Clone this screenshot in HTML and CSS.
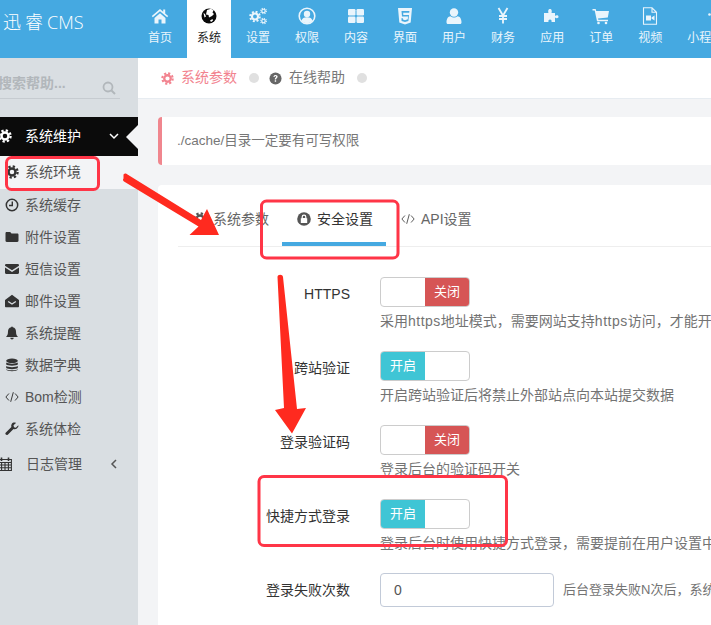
FILE: index.html
```html
<!doctype html>
<html lang="zh">
<head>
    <meta charset="utf-8">
    <title>迅睿 CMS</title>
    <link rel="stylesheet" href="styles.css">
</head>

<body>

<svg class="defs" width="0" height="0">
    <symbol id="i-gear" viewBox="0 0 16 16">
        <circle cx="8" cy="8" r="6.400" fill="none" stroke="currentColor" stroke-width="2.600" stroke-dasharray="2.600 2.430"/>
        <circle cx="8" cy="8" r="4" fill="none" stroke="currentColor" stroke-width="2.800"/>
    </symbol>
    <symbol id="i-code" viewBox="0 0 16 16">
        <path d="M4.500 4 1 8l3.500 4M11.500 4 15 8l-3.500 4M9.500 2.500l-3 11" fill="none" stroke="currentColor" stroke-width="1.100"/>
    </symbol>
</svg>

<header class="topbar">
    <div class="logo"><span class="logo-cn">迅睿</span><span>CMS</span></div>
    <nav class="nav">
        <a class="nav-item">
            <svg class="nav-icon" viewBox="0 0 18 18"><path fill="currentColor" d="M9 2 .8 9l1 1.200L9 4.200l7.200 6 1-1.200-3-2.600V2.500h-2v2.200zM3.500 11 9 6.300l5.500 4.700v5.500h-4v-4h-3v4h-4z"/></svg>
            <span>首页</span>
        </a>
        <a class="nav-item active">
            <svg class="nav-icon" viewBox="0 0 18 18"><circle cx="9" cy="9" r="7.500" fill="#0a0a0a"/><path fill="#fff" d="M7 3l4-1.200 2.500 1.500-1 2.200 1.500 1.500-2 2L9 10.500 8.500 8 6 7.500zM3.500 6l1.500 1 1 2.500-1.500 1zM10 13.500l2.500-1.500.5 1.500-2 1.500z"/></svg>
            <span>系统</span>
        </a>
        <a class="nav-item">
            <svg class="nav-icon" viewBox="0 0 18 18">
                <use href="#i-gear" x="0" y="3.500" width="12" height="12"/>
                <use href="#i-gear" x="11" y="0.500" width="7" height="7"/>
                <use href="#i-gear" x="11" y="10.500" width="7" height="7"/>
            </svg>
            <span>设置</span>
        </a>
        <a class="nav-item">
            <svg class="nav-icon" viewBox="0 0 18 18"><circle cx="9" cy="9" r="7.800" fill="none" stroke="currentColor" stroke-width="1.600"/><circle cx="9" cy="7" r="3.200" fill="currentColor"/><path fill="currentColor" d="M3.500 14c.5-2.800 2.500-3.800 5.500-3.800s5 1 5.500 3.800C13 15.500 11 16.200 9 16.200S5 15.500 3.500 14z"/></svg>
            <span>权限</span>
        </a>
        <a class="nav-item">
            <svg class="nav-icon" viewBox="0 0 18 18"><g fill="currentColor"><rect x="1" y="2" width="7.500" height="6.500" rx="1.200"/><rect x="9.500" y="2" width="7.500" height="6.500" rx="1.200"/><rect x="1" y="9.500" width="7.500" height="6.500" rx="1.200"/><rect x="9.500" y="9.500" width="7.500" height="6.500" rx="1.200"/></g></svg>
            <span>内容</span>
        </a>
        <a class="nav-item">
            <svg class="nav-icon" viewBox="0 0 18 18"><path fill="currentColor" fill-rule="evenodd" d="M2 1h14l-1.300 14.500L9 17.500l-5.700-2zm3.500 3 .5 5.500h6l-.2 2.800L9 13.200l-2-.7-.1-1.200H5.400l.2 2.700L9 15l3.400-1 .6-6H7.300l-.1-2.300h6l.2-1.700z"/></svg>
            <span>界面</span>
        </a>
        <a class="nav-item">
            <svg class="nav-icon" viewBox="0 0 18 18"><circle cx="9" cy="5.500" r="4.200" fill="currentColor"/><path fill="currentColor" d="M3 17c-1 0-1.500-.8-1.500-1.800C1.500 12 3 9.500 5.500 9.300 6.500 10.200 7.700 10.600 9 10.600s2.500-.4 3.500-1.300c2.500.2 4 2.700 4 5.900 0 1-.5 1.800-1.500 1.800z"/></svg>
            <span>用户</span>
        </a>
        <a class="nav-item">
            <svg class="nav-icon" viewBox="0 0 18 18"><path fill="none" stroke="currentColor" stroke-width="1.800" d="M4.500 1 9 8.500 13.500 1M9 8.500V16.500M5 9h8M5 12h8"/></svg>
            <span>财务</span>
        </a>
        <a class="nav-item">
            <svg class="nav-icon" viewBox="0 0 18 18"><path fill="currentColor" d="M1 6h4.500C5 4.500 5 2 7 2s2 2.500 1.500 4H12v3c1-1 3.500-1 3.500.8S13 11.500 12 10.500V15H8.500c.5-1.300-.3-2.500-1.500-2.500S5 13.700 5.500 15H1z"/></svg>
            <span>应用</span>
        </a>
        <a class="nav-item">
            <svg class="nav-icon" viewBox="0 0 18 18"><path fill="currentColor" d="M.5 2h3.200l.5 2H17l-1.200 6.500-9.800 1 .3 1.300h9.700v1.400H5L2.700 3.400H.5z"/><circle cx="6.500" cy="16" r="1.300" fill="currentColor"/><circle cx="14" cy="16" r="1.300" fill="currentColor"/></svg>
            <span>订单</span>
        </a>
        <a class="nav-item">
            <svg class="nav-icon" viewBox="0 0 18 18"><path fill="none" stroke="currentColor" stroke-width="1.100" d="M2.500 .8h8.500l4.500 4.500v12h-13zM11 .8v4.500h4.500"/><path fill="currentColor" d="M5 8.500h5v5H5zM10.500 10.500l3-2v5l-3-2z"/></svg>
            <span>视频</span>
        </a>
        <a class="nav-item">
            <svg class="nav-icon" viewBox="0 0 18 18"><circle cx="13.500" cy="7.500" r="1.300" fill="currentColor"/></svg>
            <span>小程序</span>
        </a>
    </nav>
</header>

<div class="layout">
    <aside class="sidebar">
        <div class="search">
            <span class="search-text">搜索帮助...</span>
            <svg class="search-icon" viewBox="0 0 14 14"><circle cx="6" cy="6" r="4.500" fill="none" stroke="currentColor" stroke-width="1.800"/><path d="m9.500 9.500 3.500 3.500" stroke="currentColor" stroke-width="2"/></svg>
        </div>
        <div class="menu-head">
            <svg class="menu-head-icon"><use href="#i-gear"/></svg>
            <span>系统维护</span>
            <svg class="chevron" viewBox="0 0 10 10"><path d="M1 3l4 4 4-4" fill="none" stroke="currentColor" stroke-width="1.500"/></svg>
            <i class="menu-notch"></i>
        </div>
        <a class="menu-item current">
            <svg class="menu-icon"><use href="#i-gear"/></svg>系统环境
        </a>
        <a class="menu-item">
            <svg class="menu-icon" viewBox="0 0 14 14"><circle cx="7" cy="7" r="5.700" fill="none" stroke="currentColor" stroke-width="1.500"/><path d="M7.300 3.500v4H4" fill="none" stroke="currentColor" stroke-width="1.400"/></svg>系统缓存
        </a>
        <a class="menu-item">
            <svg class="menu-icon" viewBox="0 0 14 14"><path fill="currentColor" d="M.5 3.200C.5 2.500 1 2 1.700 2h3.500L6.500 3.500h5.800c.7 0 1.200.5 1.200 1.200v6.100c0 .7-.5 1.200-1.200 1.200H1.700c-.7 0-1.200-.5-1.200-1.200z"/></svg>附件设置
        </a>
        <a class="menu-item">
            <svg class="menu-icon" viewBox="0 0 14 14"><path fill="currentColor" d="M0 3.300C0 2.600.5 2 1.200 2h11.600c.7 0 1.200.6 1.200 1.300v.5L7 8.300 0 3.800zM0 5.500l7 4.500 7-4.500v5.300c0 .7-.5 1.200-1.200 1.200H1.200C.5 12 0 11.500 0 10.800z"/></svg>短信设置
        </a>
        <a class="menu-item">
            <svg class="menu-icon" viewBox="0 0 14 14"><path fill="currentColor" fill-rule="evenodd" d="M7 .8 14 6v6.200c0 .6-.5 1-1 1H1c-.5 0-1-.4-1-1V6zM2.800 8 7 10.800 11.200 8l-.7-1L7 9.300 3.500 7z"/></svg>邮件设置
        </a>
        <a class="menu-item">
            <svg class="menu-icon" viewBox="0 0 14 14"><path fill="currentColor" d="M7 .5c.5 0 .8.300.8.800 2.200.4 3.200 2 3.200 4.200 0 3 .8 4.200 2 5.500H1c1.200-1.300 2-2.500 2-5.500C3 3.300 4 1.700 6.200 1.300c0-.5.300-.8.800-.8zM5.300 11.800h3.400C8.700 12.800 8 13.500 7 13.500s-1.700-.7-1.700-1.700z"/></svg>系统提醒
        </a>
        <a class="menu-item">
            <svg class="menu-icon" viewBox="0 0 14 14"><g fill="currentColor"><ellipse cx="7" cy="2.800" rx="5.800" ry="2.300"/><path d="M1.200 4.500C2.500 6 11.500 6 12.800 4.500v2C11.500 8 2.500 8 1.200 6.500zM1.200 8C2.500 9.500 11.500 9.500 12.800 8v2C11.500 11.500 2.500 11.500 1.200 10zM1.200 11.200c1.300 1.300 10.300 1.300 11.600 0v.6c-1 1.900-10.600 1.900-11.600 0z"/></g></svg>数据字典
        </a>
        <a class="menu-item">
            <svg class="menu-icon"><use href="#i-code"/></svg>Bom检测
        </a>
        <a class="menu-item">
            <svg class="menu-icon" viewBox="0 0 14 14"><path fill="currentColor" d="M13.300 3.300 10.800 5.700 9 5.200 8.500 3.300 11 .9C9.300.2 7.500.7 6.700 2c-.6 1-.7 2-.3 3L.9 10.500c-.7.700-.7 1.500-.1 2.100.6.600 1.500.6 2.200-.1L8.500 7c1.200.4 2.400.2 3.400-.6 1.200-1 1.800-1.900 1.400-3.100z"/></svg>系统体检
        </a>
        <div class="menu-group">
            <svg class="menu-group-icon" viewBox="0 0 14 14"><path fill="none" stroke="currentColor" stroke-width="1.100" d="M.6 2.500h12.800v11H.6zM.6 5.500h12.800M.6 8h12.800M.6 10.700h12.800M3.600 5.500v8M7 5.500v8M10.400 5.500v8"/><path stroke="currentColor" stroke-width="1.600" d="M3.500.5v3.500M10.500.5v3.500"/></svg>
            <span>日志管理</span>
            <svg class="chevron" viewBox="0 0 10 10"><path d="M7 1 3 5l4 4" fill="none" stroke="currentColor" stroke-width="1.500"/></svg>
        </div>
    </aside>

    <main class="main">
        <div class="crumbs">
            <svg class="crumb-icon crumb-icon-on"><use href="#i-gear"/></svg>
            <span class="crumb-on">系统参数</span>
            <i class="crumb-dot"></i>
            <svg class="crumb-icon" viewBox="0 0 14 14"><circle cx="7" cy="7" r="6.500" fill="currentColor"/><path d="M4.800 5.300C5 3.800 6 3.300 7 3.300c1.400 0 2.300.8 2.300 1.900 0 1.500-1.700 1.500-1.700 2.900H6.200c0-2 1.500-2 1.500-2.900 0-.5-.3-.8-.8-.8-.5 0-.8.300-.9 1.100zM6.200 9h1.500v1.500H6.200z" fill="#fff"/></svg>
            <span>在线帮助</span>
            <i class="crumb-dot"></i>
        </div>

        <div class="content">
            <div class="note">./cache/目录一定要有可写权限</div>

            <section class="card">
                <div class="tabs">
                    <a class="tab">
                        <svg class="tab-icon"><use href="#i-gear"/></svg>系统参数
                    </a>
                    <a class="tab tab-on">
                        <svg class="tab-icon" viewBox="0 0 14 14"><circle cx="7" cy="7" r="6.800" fill="currentColor"/><path fill="#fff" d="M3.800 6.200h.8V5a2.400 2.400 0 0 1 4.800 0v1.200h.8v4.800H3.800zm2-.1h2.400V5a1.200 1.200 0 0 0-2.400 0z"/></svg>安全设置
                    </a>
                    <a class="tab">
                        <svg class="tab-icon"><use href="#i-code"/></svg>API设置
                    </a>
                </div>

                <div class="field">
                    <label class="field-label">HTTPS</label>
                    <div class="field-body">
                        <div class="switch"><span class="switch-blank"></span><span class="switch-off">关闭</span></div>
                        <p class="help">采用<span class="latin">https</span>地址模式，需要网站支持<span class="latin">https</span>访问，才能开启</p>
                    </div>
                </div>
                <div class="field">
                    <label class="field-label">跨站验证</label>
                    <div class="field-body">
                        <div class="switch"><span class="switch-on">开启</span><span class="switch-blank"></span></div>
                        <p class="help">开启跨站验证后将禁止外部站点向本站提交数据</p>
                    </div>
                </div>
                <div class="field">
                    <label class="field-label">登录验证码</label>
                    <div class="field-body">
                        <div class="switch"><span class="switch-blank"></span><span class="switch-off">关闭</span></div>
                        <p class="help">登录后台的验证码开关</p>
                    </div>
                </div>
                <div class="field">
                    <label class="field-label">快捷方式登录</label>
                    <div class="field-body">
                        <div class="switch"><span class="switch-on">开启</span><span class="switch-blank"></span></div>
                        <p class="help">登录后台时使用快捷方式登录，需要提前在用户设置中开启</p>
                    </div>
                </div>
                <div class="field field-inline">
                    <label class="field-label">登录失败次数</label>
                    <div class="field-body">
                        <div class="input">0</div>
                        <p class="help">后台登录失败N次后，系统将锁定账号</p>
                    </div>
                </div>
            </section>
        </div>
    </main>
</div>

<svg class="marks" viewBox="0 0 711 625">
    <g fill="none" stroke="#ff3547" stroke-width="3">
        <rect x="6.500" y="157.500" width="92" height="32" rx="5"/>
        <rect x="261.500" y="201" width="136.500" height="57" rx="5"/>
        <rect x="259" y="476.500" width="247.500" height="69" rx="5"/>
    </g>
    <g fill="#ff2a1f">
        <path d="M123.500 174.500c1-1 2-1.200 3.200-.5L201 220l6-11 12 26h-29.500l9-8.500-74.500-45c-1.200-.9-1.300-2-.5-3z"/>
        <path d="M277.500 277c0-3 5.300-3 5.500 0L297 409l9-1-14 25.500L275 410l9-2z"/>
    </g>
</svg>

</body>
</html>
```

FILE: styles.css
```css
html, body {
    height: 100%;
    margin: 0;
    overflow: hidden;
}

body {
    position: relative;
    width: 711px;
    height: 625px;
    background: #f3f4f6;
    color: #333;
    font: 14px/20px "Liberation Sans", "Noto Sans CJK SC", sans-serif;
}

.defs {
    position: absolute;
}

.topbar {
    display: flex;
    height: 58px;
    background: #45a9e1;
    color: #eaf5fc;
}

.logo {
    flex: none;
    width: 135px;
    padding-left: 3px;
    color: #fff;
    font: 300 18px/44px "Open Sans", "Noto Sans CJK SC", sans-serif;
}

.logo-cn {
    letter-spacing: 4px;
}

.nav {
    display: flex;
    gap: 5px;
}

.nav-item {
    display: flex;
    flex: none;
    flex-direction: column;
    align-items: center;
    box-sizing: border-box;
    height: 58px;
    padding: 7px 10px 0;
    font-size: 12px;
}

.nav-item.active {
    background: #fff;
    color: #222;
}

.nav-icon {
    width: 18px;
    height: 18px;
    margin-bottom: 3px;
}

.layout {
    display: flex;
    height: 567px;
}

.sidebar {
    flex: none;
    width: 138px;
    overflow: hidden;
    background: #d9dee2;
    color: #444;
}

.search {
    display: flex;
    align-items: center;
    justify-content: space-between;
    box-sizing: border-box;
    width: 120px;
    height: 41px;
    margin: 0 0 18px;
    padding: 9px 4px 0 0;
    border-bottom: 1px solid #c6cbd0;
    color: #b2b7bb;
}

.search-text {
    margin-left: -2px;
    font-weight: bold;
}

.search-icon {
    width: 14px;
    height: 14px;
    margin-top: 10px;
}

.menu-head {
    position: relative;
    display: flex;
    align-items: center;
    box-sizing: border-box;
    height: 39px;
    padding-bottom: 2px;
    background: #0b0b0b;
    color: #fff;
}

.menu-head-icon {
    flex: none;
    width: 14px;
    height: 14px;
    margin: 0 13px 0 -2px;
}

.chevron {
    flex: none;
    width: 10px;
    height: 10px;
    margin-left: auto;
    margin-right: 19px;
}

.menu-notch {
    position: absolute;
    top: 8px;
    right: 0;
    border-top: 12px solid transparent;
    border-bottom: 12px solid transparent;
    border-right: 12px solid #f3f4f6;
}

.menu-item {
    display: flex;
    align-items: center;
    height: 32px;
    padding-left: 5px;
    color: #555;
}

.menu-item.current {
    box-sizing: border-box;
    height: 33px;
    padding-bottom: 2px;
    background: #f3f4f6;
}

.menu-icon {
    flex: none;
    width: 14px;
    height: 14px;
    margin-right: 6px;
    color: #333;
}

.menu-group {
    display: flex;
    align-items: center;
    height: 38px;
    color: #555;
}

.menu-group-icon {
    flex: none;
    width: 14px;
    height: 14px;
    margin: 0 14px 0 -2px;
    color: #333;
}

.main {
    flex: 1;
    min-width: 0;
}

.crumbs {
    display: flex;
    align-items: center;
    box-sizing: border-box;
    height: 41px;
    padding: 0 0 2px 23px;
    background: #fff;
    border-bottom: 1px solid #e7ecf1;
    color: #777;
}

.crumb-icon {
    flex: none;
    width: 13px;
    height: 13px;
    margin: 2px 7px 0 0;
    color: #666;
}

.crumb-icon-on,
.crumb-on {
    color: #f2838f;
}

.crumb-dot {
    flex: none;
    width: 10px;
    height: 10px;
    margin: 2px 10px 0 12px;
    border-radius: 50%;
    background: #e0e0e0;
}

.content {
    padding: 18px 0 0 20px;
}

.note {
    box-sizing: border-box;
    height: 48px;
    margin-bottom: 20px;
    padding-left: 15px;
    background: #fff;
    border-left: 4px solid #f0868e;
    border-radius: 4px 0 0 4px;
    color: #777;
    font-size: 13.5px;
    line-height: 47px;
}

.card {
    height: 460px;
    padding-left: 20px;
    background: #fff;
    border-radius: 4px 0 0 0;
}

.tabs {
    display: flex;
    box-sizing: border-box;
    height: 62px;
    border-bottom: 1px solid #eee;
}

.tab {
    display: flex;
    align-items: center;
    box-sizing: border-box;
    height: 61px;
    padding: 7px 13px 0 15px;
    color: #666;
}

.tab:first-child {
    margin-left: 11px;
    padding-left: 4px;
}

.tab-on {
    padding-top: 11px;
    border-bottom: 4px solid #45a9e1;
    color: #333;
}

.tab-icon {
    flex: none;
    width: 14px;
    height: 14px;
    margin-right: 6px;
    color: #555;
}

.tabs + .field {
    margin-top: 30px;
}

.field {
    display: flex;
    height: 74px;
}

.field-label {
    flex: none;
    width: 172px;
    padding-top: 7px;
    text-align: right;
}

.field-body {
    flex: none;
    margin-left: 30px;
}

.switch {
    display: flex;
    box-sizing: border-box;
    width: 90px;
    height: 30px;
    overflow: hidden;
    background: #fff;
    border: 1px solid #ccc;
    border-radius: 4px;
    color: #fff;
    font-size: 13px;
    line-height: 28px;
    text-align: center;
}

.switch-blank {
    width: 44px;
}

.switch-on {
    width: 44px;
    background: #3fc5d5;
}

.switch-off {
    width: 44px;
    background: #d65555;
}

.help {
    margin: 4px 0 0;
    color: #737373;
    white-space: nowrap;
}

.latin {
    letter-spacing: .5px;
}

.field-inline .field-body {
    display: flex;
    align-items: center;
    gap: 9px;
    height: 34px;
}

.field-inline .help {
    margin: 0;
    font-size: 13px;
}

.input {
    box-sizing: border-box;
    width: 174px;
    height: 34px;
    padding-left: 13px;
    border: 1px solid #c2cad8;
    border-radius: 4px;
    color: #555;
    line-height: 32px;
}

.marks {
    position: absolute;
    top: 0;
    left: 0;
    width: 711px;
    height: 625px;
    pointer-events: none;
}
```
